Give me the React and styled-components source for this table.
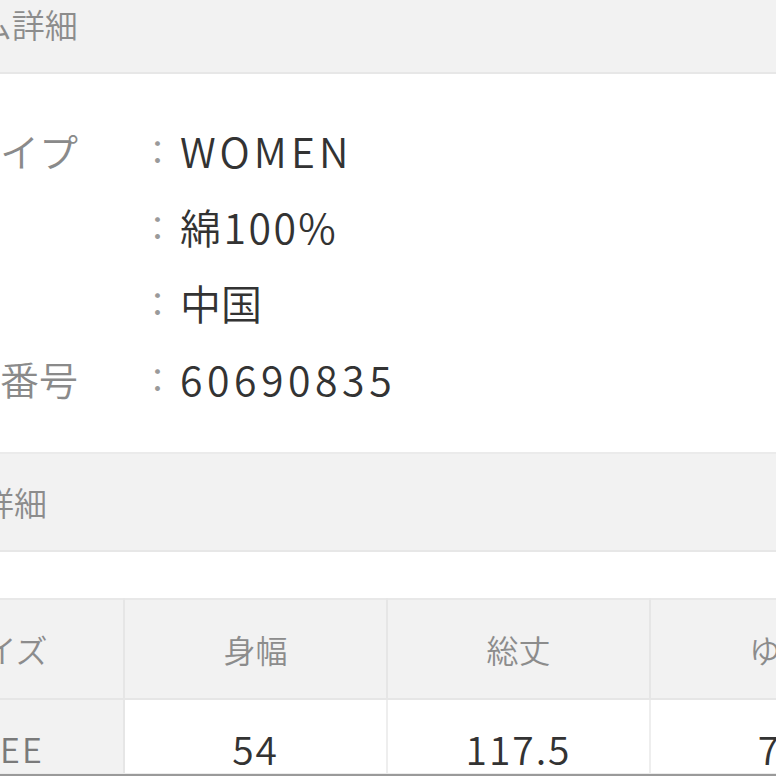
import React from 'react';
import styled, { createGlobalStyle } from 'styled-components';

const GlobalStyle = createGlobalStyle`
  html, body {
    margin: 0;
    padding: 0;
    background: #fff;
    overflow: hidden;
  }
  body {
    font-family: "Noto Sans CJK JP", "Noto Sans", sans-serif;
  }
`;

const Screen = styled.div`
  width: 776px;
  height: 776px;
  overflow: hidden;
  position: relative;
`;

const Sheet = styled.div`
  width: 1200px;
  margin-left: -123px;
  margin-top: -26px;
`;

const SectionHeader = styled.div`
  display: flex;
  align-items: center;
  height: 96px;
  padding-left: 6px;
  background: #f2f2f2;
  border-top: 2px solid #ebebeb;
  border-bottom: 2px solid #e7e7e7;
  font-size: 33px;
  font-weight: 350;
  color: #8c8c8c;
`;

const DetailList = styled.div`
  padding: 38px 0 36px 6px;
`;

const DetailRow = styled.div`
  display: grid;
  grid-template-columns: 255px 39px 1fr;
  align-items: center;
  height: 76px;
  font-size: 39px;
  font-weight: 350;
`;

const Label = styled.span`
  color: #8a8a8a;
  white-space: nowrap;
  overflow: hidden;
`;

const Colon = styled.span`
  color: #9a9a9a;
  text-align: center;
  font-size: 34px;
`;

const Value = styled.span`
  color: #333;
  padding-left: 3px;
  font-size: 41px;
  letter-spacing: ${(p) => p.$spacing || '0'};
`;

const Gap = styled.div`
  height: 46px;
`;

const SizeTable = styled.table`
  border-collapse: collapse;
  table-layout: fixed;
  border-top: 2px solid #e8e8e8;
`;

const HeadCell = styled.th`
  width: ${(p) => p.$w}px;
  height: 98px;
  padding: 0;
  background: #f2f2f2;
  border-right: 2px solid #e6e6e6;
  border-bottom: 2px solid #e6e6e6;
  font-weight: 350;
  font-size: 32px;
  color: #8c8c8c;
  text-align: center;
`;

const RowHead = styled.th`
  height: 96px;
  padding: 0 0 20px;
  background: #f2f2f2;
  border-right: 2px solid #e6e6e6;
  font-weight: 350;
  font-size: 34px;
  color: #7a7a7a;
  text-align: center;
  letter-spacing: 0.06em;
`;

const DataCell = styled.td`
  height: 96px;
  padding: 0 0 20px;
  border-right: 2px solid #eeeeee;
  font-size: 39px;
  font-weight: 350;
  color: #333;
  text-align: center;
  letter-spacing: 0.05em;
`;

const BottomEdge = styled.div`
  position: absolute;
  left: 0;
  right: 0;
  bottom: 0;
  height: 2px;
  background: #9a9a9a;
  border-top: 1px solid #ececec;
`;

const details = [
  { label: '商品タイプ', value: 'WOMEN', spacing: '0.1em' },
  { label: '素材', value: '綿100%', spacing: '0.06em' },
  { label: '原産国', value: '中国' },
  { label: '製品型番号', value: '60690835', spacing: '0.11em' },
];

const columns = [
  { title: 'サイズ', w: 246 },
  { title: '身幅', w: 261 },
  { title: '総丈', w: 261 },
  { title: 'ゆき', w: 260 },
];

const sizes = [{ size: 'FREE', values: ['54', '117.5', '78'] }];

export default function App() {
  return (
    <>
      <GlobalStyle />
      <Screen>
        <Sheet>
          <SectionHeader>アイテム詳細</SectionHeader>
          <DetailList>
            {details.map((d) => (
              <DetailRow key={d.label}>
                <Label>{d.label}</Label>
                <Colon>：</Colon>
                <Value $spacing={d.spacing}>{d.value}</Value>
              </DetailRow>
            ))}
          </DetailList>
          <SectionHeader>サイズ詳細</SectionHeader>
          <Gap />
          <SizeTable>
            <thead>
              <tr>
                {columns.map((c) => (
                  <HeadCell key={c.title} $w={c.w}>
                    {c.title}
                  </HeadCell>
                ))}
              </tr>
            </thead>
            <tbody>
              {sizes.map((s) => (
                <tr key={s.size}>
                  <RowHead>{s.size}</RowHead>
                  {s.values.map((v, i) => (
                    <DataCell key={i}>{v}</DataCell>
                  ))}
                </tr>
              ))}
            </tbody>
          </SizeTable>
        </Sheet>
        <BottomEdge />
      </Screen>
    </>
  );
}
